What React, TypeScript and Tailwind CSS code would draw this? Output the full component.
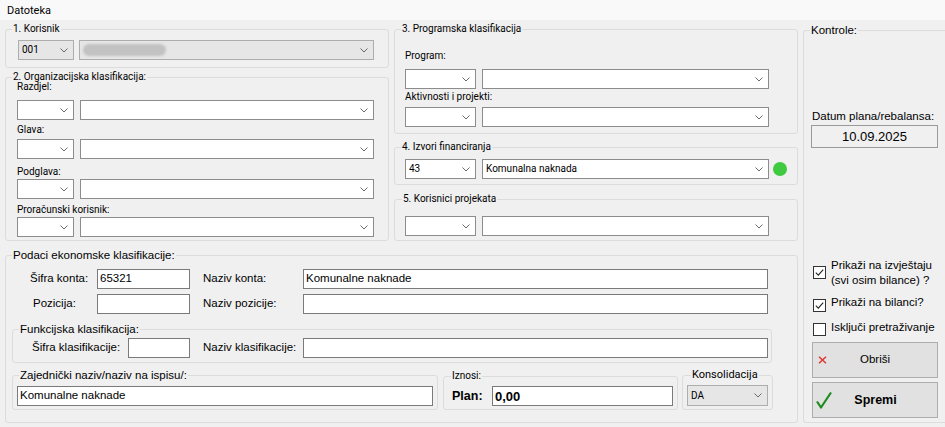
import React from 'react';

const SEG = "font-['Roboto','Liberation_Sans',sans-serif] text-[10px]";
const MS = "font-['Liberation_Sans',Arial,sans-serif] text-[11.5px]";

const Chevron = () => (
  <svg width="8" height="5" viewBox="0 0 8 5" className="shrink-0">
    <path d="M0.5 0.5 L4 4 L7.5 0.5" fill="none" stroke="#6a6a6a" strokeWidth="1" />
  </svg>
);

interface ComboProps {
  className: string;
  value?: string;
  gray?: boolean;
  children?: React.ReactNode;
}

const Combo: React.FC<ComboProps> = ({ className, value, gray, children }) => (
  <div
    className={`flex items-center justify-between border pl-[3px] pr-[5px] ${
      gray ? 'border-[#adadad] bg-[#e6e6e6]' : 'border-[#8c8c8c] bg-white'
    } ${className}`}
  >
    {children ?? <span className={`${SEG} leading-none text-black whitespace-nowrap`}>{value}</span>}
    <Chevron />
  </div>
);

const TextBox: React.FC<{ className: string; value?: string; bold?: boolean }> = ({ className, value, bold }) => (
  <div className={`flex items-center h-[20px] border border-[#7a7a7a] bg-white pl-[2px] ${className}`}>
    <span className={bold ? "font-['Liberation_Sans',Arial,sans-serif] text-[13px] font-bold leading-none" : `${MS} leading-none`}>
      {value}
    </span>
  </div>
);

interface GroupProps {
  title: string;
  className: string;
  titleClass: string;
  children?: React.ReactNode;
}

const Group: React.FC<GroupProps> = ({ title, className, titleClass, children }) => (
  <div className={`border border-[#dcdcdc] rounded-[3px] ${className}`}>
    <div className={`-mt-[7px] h-[8px] w-fit bg-[#f0f0f0] px-[1px] leading-[12px] whitespace-nowrap text-black ${titleClass}`}>
      {title}
    </div>
    {children}
  </div>
);

const Label: React.FC<{ text: string; className: string }> = ({ text, className }) => (
  <div className={`${SEG} h-[12px] leading-[12px] text-black whitespace-nowrap ${className}`}>{text}</div>
);

const ComboPair: React.FC<{ className: string; small: string; large: string; value?: string; name?: string; extra?: React.ReactNode }> = ({
  className,
  small,
  large,
  value,
  name,
  extra,
}) => (
  <div className={`flex items-center ${className}`}>
    <Combo className={`h-[20px] ${small}`} value={value} />
    <Combo className={`h-[20px] ml-[6px] ${large}`} value={name} />
    {extra}
  </div>
);

const CheckBox: React.FC<{ checked?: boolean; className: string }> = ({ checked, className }) => (
  <div className={`w-[13px] h-[13px] shrink-0 border border-[#333333] bg-white flex items-center justify-center ${className}`}>
    {checked && (
      <svg width="11" height="11" viewBox="0 0 11 11">
        <path d="M1.8 5.6 L4.3 8.1 L9.2 2.6" fill="none" stroke="#222" strokeWidth="1.1" />
      </svg>
    )}
  </div>
);

export default function App() {
  return (
    <div className="w-[945px] h-[427px] bg-[#f0f0f0] overflow-hidden text-black">
      {/* menu */}
      <div className="h-[20px] bg-[#f9f9f9] flex items-center pl-[7px]">
        <span className="font-['Roboto','Liberation_Sans',sans-serif] text-[11px] leading-none">Datoteka</span>
      </div>

      <div className="flex items-start pl-[5px]">
        {/* left area */}
        <div className="w-[793px] shrink-0">
          <div className="flex items-start">
            {/* column A */}
            <div className="w-[384px] shrink-0 mt-[9px]">
              <Group title="1. Korisnik" className="h-[39px]" titleClass={`${SEG} ml-[6px]`}>
                <div className="flex items-center mt-[9px] pl-[12px]">
                  <Combo className="h-[20px] w-[56px]" value="001" gray />
                  <Combo className="h-[20px] w-[295px] ml-[5px]" gray>
                    <div className="w-[83px] h-[12px] rounded-full bg-[#c2c2c2] blur-[1px]" />
                  </Combo>
                </div>
              </Group>

              <Group title="2. Organizacijska klasifikacija:" className="h-[164px] mt-[9px]" titleClass={`${SEG} ml-[6px]`}>
                <div className="pl-[11px]">
                  <Label text="Razdjel:" className="mt-[2px]" />
                  <ComboPair className="mt-[7px]" small="w-[57px]" large="w-[294px]" />
                  <Label text="Glava:" className="mt-[4px]" />
                  <ComboPair className="mt-[3px]" small="w-[57px]" large="w-[294px]" />
                  <Label text="Podglava:" className="mt-[7px]" />
                  <ComboPair className="mt-[1px]" small="w-[57px]" large="w-[294px]" />
                  <Label text="Proračunski korisnik:" className="mt-[5px]" />
                  <ComboPair className="mt-[1px]" small="w-[57px]" large="w-[294px]" />
                </div>
              </Group>
            </div>

            {/* column B */}
            <div className="w-[404px] shrink-0 ml-[5px] mt-[9px]">
              <Group title="3. Programska klasifikacija" className="h-[105px]" titleClass={`${SEG} ml-[6px]`}>
                <div className="pl-[10px]">
                  <Label text="Program:" className="mt-[19px]" />
                  <ComboPair className="mt-[7px]" small="w-[71px]" large="w-[287px]" />
                  <Label text="Aktivnosti i projekti:" className="mt-[2px]" />
                  <ComboPair className="mt-[4px]" small="w-[71px]" large="w-[287px]" />
                </div>
              </Group>

              <Group title="4. Izvori financiranja" className="h-[38px] mt-[13px]" titleClass={`${SEG} ml-[6px]`}>
                <div className="pl-[10px]">
                  <ComboPair
                    className="mt-[10px]"
                    small="w-[71px]"
                    large="w-[287px]"
                    value="43"
                    name="Komunalna naknada"
                    extra={<div className="ml-[4px] w-[14px] h-[14px] rounded-full bg-[#3fca3f]" />}
                  />
                </div>
              </Group>

              <Group title="5. Korisnici projekata" className="h-[42px] mt-[14px]" titleClass={`${SEG} ml-[7px]`}>
                <div className="pl-[10px]">
                  <ComboPair className="mt-[15px]" small="w-[71px]" large="w-[287px]" />
                </div>
              </Group>
            </div>
          </div>

          {/* economic classification */}
          <Group title="Podaci ekonomske klasifikacije:" className="h-[168px] mt-[14px]" titleClass={`${MS} ml-[6px]`}>
            <div className="flex items-center mt-[12px] pl-[24px]">
              <div className={`${MS} w-[67px]`}>Šifra konta:</div>
              <TextBox className="w-[93px]" value="65321" />
              <div className={`${MS} w-[100px] ml-[13px]`}>Naziv konta:</div>
              <TextBox className="w-[465px]" value="Komunalne naknade" />
            </div>
            <div className="flex items-center mt-[5px] pl-[27px]">
              <div className={`${MS} w-[64px]`}>Pozicija:</div>
              <TextBox className="w-[93px]" />
              <div className={`${MS} w-[100px] ml-[13px]`}>Naziv pozicije:</div>
              <TextBox className="w-[465px]" />
            </div>

            <Group title="Funkcijska klasifikacija:" className="h-[34px] w-[760px] mt-[15px] ml-[6px]" titleClass={`${MS} ml-[6px]`}>
              <div className="flex items-center mt-[7px] pl-[19px]">
                <div className={`${MS} w-[96px]`}>Šifra klasifikacije:</div>
                <TextBox className="w-[62px]" />
                <div className={`${MS} w-[100px] ml-[13px]`}>Naziv klasifikacije:</div>
                <TextBox className="w-[465px]" />
              </div>
            </Group>

            <div className="flex items-start mt-[12px] ml-[6px]">
              <Group title="Zajednički naziv/naziv na ispisu/:" className="h-[35px] w-[426px]" titleClass={`${MS} ml-[6px]`}>
                <TextBox className="w-[416px] mt-[9px] ml-[4px]" value="Komunalne naknade" />
              </Group>
              <Group title="Iznosi:" className="h-[34px] w-[235px] ml-[5px] mt-[1px]" titleClass={`${SEG} text-[10.5px] ml-[7px]`}>
                <div className="flex items-center mt-[8px] pl-[8px]">
                  <div className="font-['Liberation_Sans',Arial,sans-serif] text-[12.5px] font-bold w-[40px]">Plan:</div>
                  <TextBox className="w-[181px]" value="0,00" bold />
                </div>
              </Group>
              <Group title="Konsolidacija" className="h-[35px] w-[91px] ml-[4px]" titleClass="font-['Roboto','Liberation_Sans',sans-serif] text-[11px] ml-[8px]">
                <Combo className="h-[21px] w-[81px] mt-[8px] ml-[4px]" value="DA" gray />
              </Group>
            </div>
          </Group>
        </div>

        {/* right panel */}
        <Group title="Kontrole:" className="w-[150px] h-[393px] shrink-0 ml-[5px] mt-[10px] border-r-0" titleClass={`${MS} ml-[6px]`}>
          <div className={`${MS} leading-[13px] mt-[78px] ml-[8px]`}>Datum plana/rebalansa:</div>
          <div className="w-[127px] h-[23px] mt-[2px] ml-[7px] border border-[#9a9a9a] bg-[#f0f0f0] flex items-center justify-center">
            <span className="font-['Liberation_Sans',Arial,sans-serif] text-[13px] leading-none">10.09.2025</span>
          </div>

          <div className="flex items-start mt-[110px] pl-[9px]">
            <CheckBox checked className="mt-[8px]" />
            <div className={`${MS} leading-[15px] ml-[5px]`}>
              Prikaži na izvještaju
              <br />
              (svi osim bilance) ?
            </div>
          </div>
          <div className="flex items-start mt-[7px] pl-[9px]">
            <CheckBox checked className="mt-[4px]" />
            <div className={`${MS} leading-[15px] ml-[5px]`}>Prikaži na bilanci?</div>
          </div>
          <div className="flex items-start mt-[8px] pl-[9px]">
            <CheckBox className="mt-[3px]" />
            <div className={`${MS} leading-[15px] ml-[5px]`}>Isključi pretraživanje</div>
          </div>

          <button className="flex items-center w-[126px] h-[36px] mt-[6px] ml-[8px] border border-[#adadad] bg-[#e1e1e1] pl-[5px]">
            <svg width="9" height="8" viewBox="0 0 9 8" className="shrink-0">
              <path d="M1 0.8 L8 7.2 M8 0.8 L1 7.2" stroke="#e2312f" strokeWidth="1.4" />
            </svg>
            <span className={`${MS} flex-1 text-center pr-[14px]`}>Obriši</span>
          </button>
          <button className="flex items-center w-[126px] h-[36px] mt-[4px] ml-[8px] border border-[#adadad] bg-[#e1e1e1] pl-[3px]">
            <svg width="16" height="18" viewBox="0 0 16 18" className="shrink-0">
              <path d="M1 10.5 L5 16.5 L15 1.5" fill="none" stroke="#1e8b1e" strokeWidth="2.2" strokeLinejoin="round" />
            </svg>
            <span className="font-['Liberation_Sans',Arial,sans-serif] text-[12.5px] font-bold flex-1 text-center pr-[18px]">Spremi</span>
          </button>
        </Group>
      </div>
    </div>
  );
}
